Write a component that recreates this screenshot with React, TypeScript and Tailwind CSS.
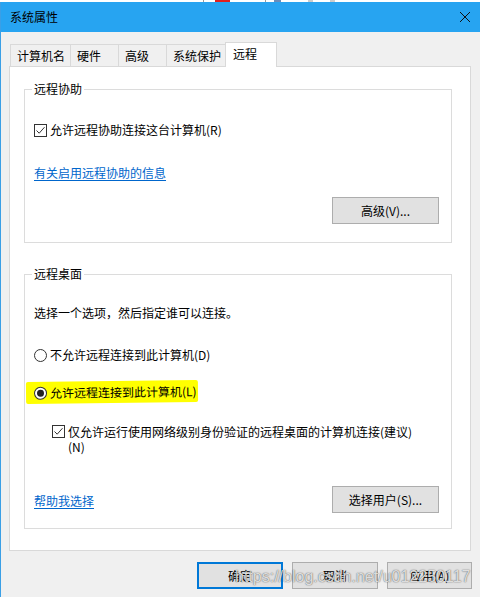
import React from 'react';

const font = "font-['Noto_Sans_CJK_SC','Noto_Sans',sans-serif]";

const CheckBox: React.FC = () => (
  <span className="w-[13px] h-[13px] shrink-0 border border-[#333] bg-white flex items-center justify-center">
    <svg width="11" height="11" viewBox="0 0 11 11">
      <path d="M1.5 5.5 L4.2 8.2 L9.5 2.2" fill="none" stroke="#333" strokeWidth="1" />
    </svg>
  </span>
);

const Radio: React.FC<{ checked?: boolean }> = ({ checked }) => (
  <span className="w-[13px] h-[13px] shrink-0 rounded-full border border-[#333] bg-white flex items-center justify-center">
    {checked && <span className="w-[7px] h-[7px] rounded-full bg-[#222]" />}
  </span>
);

const Button: React.FC<{ label: string; className?: string }> = ({ label, className }) => (
  <div
    className={
      'h-[27px] flex items-center justify-center bg-[#e1e1e1] text-[12px] leading-[16px] text-black ' +
      (className ?? 'border border-[#adadad]')
    }
  >
    {label}
  </div>
);

const Legend: React.FC<{ text: string }> = ({ text }) => (
  <span className="-mt-[9px] ml-[7px] px-[2px] w-fit bg-white text-[12px] leading-[16px] text-black">{text}</span>
);

export default function App() {
  return (
    <div className={`relative w-[480px] h-[597px] overflow-hidden bg-white ${font}`}>
      {/* background windows peeking above */}
      <div className="h-[2px] flex">
        <span className="w-[203px]" />
        <span className="w-[1px] bg-[#999]" />
        <span className="w-[11px]" />
        <span className="w-[15px] bg-[#e02020]" />
        <span className="w-[35px]" />
        <span className="w-[1px] bg-[#999]" />
        <span className="w-[8px]" />
        <span className="w-[7px] bg-[#6b8cb8]" />
        <span className="w-[27px]" />
        <span className="w-[5px] bg-[#ccc]" />
        <span className="w-[17px]" />
        <span className="w-[5px] bg-[#ccc]" />
      </div>

      <div className="h-[595px] border-l border-[#3a9fe6] flex flex-col">
        {/* title bar */}
        <div className="h-[30px] shrink-0 bg-[#27a4f1] flex items-center pl-[9px] pr-[9px]">
          <span className="text-[12px] leading-[16px] text-black">系统属性</span>
          <span className="ml-auto w-[12px] h-[12px] flex items-center justify-center">
            <svg width="12" height="12" viewBox="0 0 12 12">
              <path d="M1 1 L11 11 M11 1 L1 11" stroke="#111" strokeWidth="1" />
            </svg>
          </span>
        </div>

        {/* body */}
        <div className="flex-1 bg-[#f0f0f0] flex flex-col pt-[10px]">
          {/* tabs */}
          <div className="ml-[9px] h-[24px] flex items-start relative z-10">
            <div className="mt-[2px] h-[22px] w-[60px] border-l border-t border-[#d9d9d9] pl-[6px] flex items-center text-[12px] leading-[16px]">计算机名</div>
            <div className="mt-[2px] h-[22px] w-[48px] border-l border-t border-[#d9d9d9] pl-[6px] flex items-center text-[12px] leading-[16px]">硬件</div>
            <div className="mt-[2px] h-[22px] w-[48px] border-l border-t border-[#d9d9d9] pl-[6px] flex items-center text-[12px] leading-[16px]">高级</div>
            <div className="mt-[2px] h-[22px] w-[61px] border-l border-t border-[#d9d9d9] pl-[6px] flex items-center text-[12px] leading-[16px]">系统保护</div>
            <div className="-ml-[2px] h-[25px] w-[52px] bg-white border-l border-t border-r border-[#d9d9d9] pl-[7px] pb-[3px] flex items-center text-[12px] leading-[16px]">远程</div>
          </div>

          {/* panel */}
          <div className="ml-[8px] w-[462px] h-[485px] bg-white border border-[#d9d9d9] flex flex-col">
            {/* 远程协助 */}
            <div className="ml-[14px] mt-[22px] w-[428px] h-[154px] border border-[#dcdcdc] flex flex-col">
              <Legend text="远程协助" />
              <div className="mt-[25px] ml-[9px] h-[16px] flex items-center gap-[3px] text-[12px] leading-[16px]">
                <CheckBox />
                <span>允许远程协助连接这台计算机(R)</span>
              </div>
              <a className="mt-[27px] ml-[9px] w-fit text-[12px] leading-[16px] text-[#0066cc] underline underline-offset-[2px]">
                有关启用远程协助的信息
              </a>
              <div className="mt-[16px] mr-[12px] self-end w-[107px]">
                <Button label="高级(V)..." />
              </div>
            </div>

            {/* 远程桌面 */}
            <div className="ml-[14px] mt-[31px] w-[428px] h-[255px] border border-[#dcdcdc] flex flex-col">
              <Legend text="远程桌面" />
              <div className="mt-[23px] ml-[9px] text-[12px] leading-[16px]">选择一个选项，然后指定谁可以连接。</div>
              <div className="mt-[26px] ml-[9px] h-[16px] flex items-center gap-[3px] text-[12px] leading-[16px]">
                <Radio />
                <span>不允许远程连接到此计算机(D)</span>
              </div>
              <div className="mt-[18px] ml-[1px] pl-[8px] w-[172px] h-[22px] bg-[#ffff00] rounded-[2px] -rotate-[0.6deg] flex items-center gap-[3px] text-[12px] leading-[16px]">
                <Radio checked />
                <span>允许远程连接到此计算机(L)</span>
              </div>
              <div className="mt-[21px] ml-[27px] flex items-start gap-[3px] text-[12px] leading-[15px]">
                <span className="mt-[1px]">
                  <CheckBox />
                </span>
                <span>
                  仅允许运行使用网络级别身份验证的远程桌面的计算机连接(建议)
                  <br />
                  (N)
                </span>
              </div>
              <div className="mt-[32px] ml-[9px] mr-[12px] flex items-center justify-between">
                <a className="mt-[3px] text-[12px] leading-[16px] text-[#0066cc] underline underline-offset-[2px]">帮助我选择</a>
                <div className="w-[107px]">
                  <Button label="选择用户(S)..." />
                </div>
              </div>
            </div>
          </div>

          {/* dialog buttons */}
          <div className="mt-[11px] pr-[8px] flex justify-end gap-[9px]">
            <div className="w-[86px]">
              <Button label="确定" className="border-2 border-[#0078d7]" />
            </div>
            <div className="w-[86px]">
              <Button label="取消" />
            </div>
            <div className="w-[85px]">
              <Button label="应用(A)" />
            </div>
          </div>
        </div>
      </div>

      {/* watermark */}
      <div className="absolute left-[235px] top-[566px] font-['Liberation_Sans',sans-serif] text-[16px] leading-[22px] text-[rgba(245,245,245,0.85)] [text-shadow:0_0_1px_rgba(0,0,0,0.6),0_0_2px_rgba(0,0,0,0.25)] pointer-events-none whitespace-nowrap">
        https://blog.csdn.net/u012250117
      </div>
    </div>
  );
}
